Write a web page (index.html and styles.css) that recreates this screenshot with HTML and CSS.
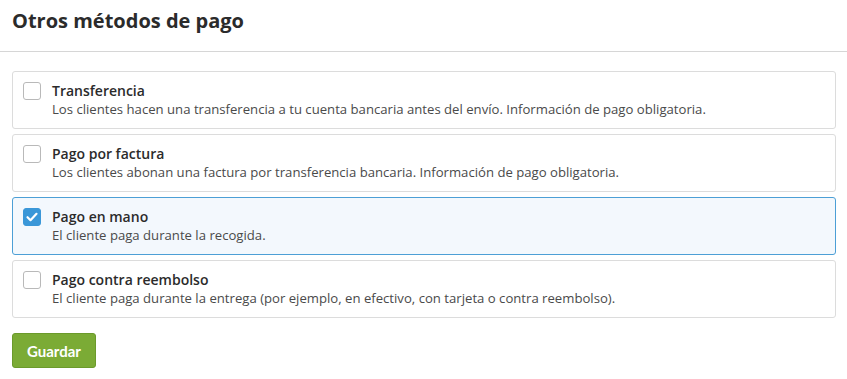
FILE: index.html
```html
<!DOCTYPE html>
<html lang="es">
<head>
  <meta charset="UTF-8" />
  <meta name="viewport" content="width=device-width, initial-scale=1.0"/>
  <title>Otros métodos de pago</title>
  <link rel="stylesheet" href="styles.css">
</head>
<body>

  <div class="panel-header">
    <h2>Otros métodos de pago</h2>
  </div>

  <form class="panel-body">
    <div class="methods">
      <label class="method">
        <input type="checkbox" />
        <span class="box"></span>
        <span class="text">
          <span class="name">Transferencia</span>
          <span class="desc">Los clientes hacen una transferencia a tu cuenta bancaria antes del envío. Información de pago obligatoria.</span>
        </span>
      </label>
      <label class="method">
        <input type="checkbox" />
        <span class="box"></span>
        <span class="text">
          <span class="name">Pago por factura</span>
          <span class="desc">Los clientes abonan una factura por transferencia bancaria. Información de pago obligatoria.</span>
        </span>
      </label>
      <label class="method checked">
        <input type="checkbox" checked />
        <span class="box">
          <svg viewBox="0 0 18 18" width="18" height="18"><path d="M4.5 9.2l3 3 6-6.4" fill="none" stroke="#fff" stroke-width="2.2" stroke-linecap="round" stroke-linejoin="round"/></svg>
        </span>
        <span class="text">
          <span class="name">Pago en mano</span>
          <span class="desc">El cliente paga durante la recogida.</span>
        </span>
      </label>
      <label class="method">
        <input type="checkbox" />
        <span class="box"></span>
        <span class="text">
          <span class="name">Pago contra reembolso</span>
          <span class="desc">El cliente paga durante la entrega (por ejemplo, en efectivo, con tarjeta o contra reembolso).</span>
        </span>
      </label>
    </div>
    <button type="submit">Guardar</button>
  </form>

</body>
</html>
```

FILE: styles.css
```css
body { font-family: "Open Sans", Lato, sans-serif; margin: 0; background: #fff; color: #2b2b2b; }
.panel-header { padding: 5px 12px 15px; border-bottom: 1px solid #d6d6d6; }
.panel-header h2 { margin: 0; font-size: 20px; font-weight: 700; line-height: 31px; color: #2b2b2b; }
.panel-body { padding: 19px 11px 11px 12px; }
.methods { display: flex; flex-direction: column; gap: 5px; }
.method { display: flex; align-items: flex-start; gap: 11px; padding: 10px 10px 11px; height: 35px; border: 1px solid #dcdcdc; border-radius: 3px; background: #fff; cursor: pointer; }
.method input { display: none; }
.method .box { flex: none; width: 16px; height: 16px; border: 1px solid #b9b9b9; border-radius: 3px; background: #fff; }
.method.checked { border-color: #4c9fd6; background: #f3f8fd; }
.method.checked .box { border-color: #3a97d8; background: #3a97d8; }
.method .box svg { display: block; margin: -1px; }
.method .text { display: flex; flex-direction: column; }
.method .name { font-size: 14px; font-weight: 600; line-height: 18px; color: #2b2b2b; }
.method .desc { font-size: 13.15px; line-height: 18px; color: #4a4a4a; }
button { margin-top: 15px; padding: 0 14px; height: 35px; font-family: Lato, "Open Sans", sans-serif; font-size: 15px; font-weight: 700; color: #fff; background: #7bab35; border: 1px solid #6b9a2b; border-radius: 3px; cursor: pointer; }
```
